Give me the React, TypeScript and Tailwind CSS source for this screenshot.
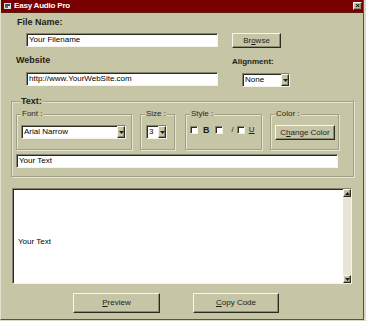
import React from "react";

const BG = "bg-[#c6c5a6]";
const sunken =
  "border border-t-[#85846e] border-l-[#85846e] border-b-[#f4f4ec] border-r-[#f4f4ec] shadow-[inset_1px_1px_0_#2c2b22]";
const raised =
  "border border-t-[#f6f6ee] border-l-[#f6f6ee] border-b-[#2c2b22] border-r-[#2c2b22] shadow-[inset_-1px_-1px_0_#8c8b74]";
const etched =
  "border border-[#a09f87] shadow-[inset_1px_1px_0_#e6e5d2,1px_1px_0_#e6e5d2]";

function Arrow({ up = false }: { up?: boolean }) {
  return (
    <svg width="5" height="3" viewBox="0 0 5 3" className={up ? "rotate-180" : ""}>
      <path d="M0 0h5L2.5 3z" fill="#1f1e18" />
    </svg>
  );
}

function Select({ value, w }: { value: string; w: string }) {
  return (
    <div className={`${w} h-[14px] bg-white flex items-stretch ${sunken}`}>
      <span className="flex-1 pl-[2px] text-[8px] leading-[12px] text-black truncate">{value}</span>
      <span className={`w-[8px] ${BG} ${raised} flex items-center justify-center`}>
        <Arrow />
      </span>
    </div>
  );
}

function Button({ children, cls }: { children: React.ReactNode; cls: string }) {
  return (
    <button className={`${cls} ${BG} ${raised} text-[8px] leading-none text-[#1f1e18] flex items-center justify-center`}>
      {children}
    </button>
  );
}

function Box({ label, cls, children }: { label: string; cls: string; children: React.ReactNode }) {
  return (
    <fieldset className={`${cls} ${etched}`}>
      <legend className={`ml-[4px] px-[1px] ${BG} text-[8px] leading-[10px] text-[#2a2920]`}>{label}</legend>
      {children}
    </fieldset>
  );
}

function Check() {
  return <span className={`block w-[8px] h-[8px] bg-white ${sunken}`} />;
}

export default function App() {
  return (
    <div
      className="w-[366px] h-[321px] bg-[#d9d8c4] overflow-hidden"
      style={{ fontFamily: '"Liberation Sans", Arial, sans-serif' }}
    >
      <div className={`w-[364px] h-[320px] ${BG} border-l border-l-[#e2e1cd] border-r border-r-[#55543f] border-b border-b-[#55543f]`}>
        {/* title bar */}
        <div className="h-[13px] bg-[#780000] flex items-center pl-[2px] pr-[1px] border-b border-b-[#5c1a10]">
          <svg width="7" height="6" viewBox="0 0 7 6" className="ml-[1px]">
            <rect x="0" y="0" width="7" height="6" fill="#e0e0d8" />
            <rect x="1" y="1" width="5" height="2" fill="#2a4a9a" />
            <rect x="1" y="3" width="3" height="2" fill="#6a6a60" />
          </svg>
          <span className="ml-[3px] text-[8px] font-bold tracking-[-0.2px] text-white leading-none">
            Easy Audio Pro
          </span>
          <span className={`ml-auto w-[9px] h-[8px] ${BG} ${raised} flex items-center justify-center text-[8px] leading-none text-black font-bold`}>
            ×
          </span>
        </div>

        {/* file name */}
        <div className="ml-[16px] mt-[4px] text-[9px] font-bold leading-[11px] text-[#1f1e18]">File Name:</div>
        <div className="flex items-start mt-[5px] ml-[25px]">
          <div className={`w-[192px] h-[14px] bg-white ${sunken} pl-[2px] text-[8px] leading-[12px] text-black`}>
            Your Filename
          </div>
          <Button cls="ml-[14px] w-[49px] h-[15px]">
            <span>
              Br<span className="underline">o</span>wse
            </span>
          </Button>
        </div>

        {/* website / alignment */}
        <div className="flex items-start mt-[7px]">
          <div className="w-[231px] pl-[15px] text-[9px] font-bold leading-[11px] text-[#1f1e18]">Website</div>
          <div className="pt-[1px] text-[8px] font-bold leading-[11px] text-[#1f1e18]">Alignment:</div>
        </div>
        <div className="flex items-start mt-[5px] ml-[25px]">
          <div className={`w-[192px] h-[14px] bg-white ${sunken} pl-[2px] text-[8px] leading-[12px] text-black`}>
            http://www.YourWebSite.com
          </div>
          <div className="ml-[24px] mt-[1px]">
            <Select value="None" w="w-[48px]" />
          </div>
        </div>

        {/* text group */}
        <fieldset className={`ml-[10px] mt-[9px] w-[343px] h-[81px] pl-[4px] ${etched}`}>
          <legend className={`ml-[4px] px-[1px] ${BG} text-[9px] font-bold leading-[11px] text-[#1f1e18]`}>Text:</legend>
          <div className="flex items-start mt-[2px]">
            <Box label="Font :" cls="w-[116px] h-[41px]">
              <div className="ml-[4px] mt-[6px]">
                <Select value="Arial Narrow" w="w-[105px]" />
              </div>
            </Box>
            <Box label="Size :" cls="ml-[8px] w-[35px] h-[41px]">
              <div className="ml-[5px] mt-[6px]">
                <Select value="3" w="w-[21px]" />
              </div>
            </Box>
            <Box label="Style :" cls="ml-[10px] w-[77px] h-[41px]">
              <div className="flex items-center ml-[4px] mt-[6px] text-[8px] leading-[10px] text-[#1f1e18]">
                <Check />
                <span className="ml-[5px] font-bold text-[9px]">B</span>
                <span className="ml-[5px]"><Check /></span>
                <span className="ml-[9px]">/</span>
                <span className="ml-[3px]"><Check /></span>
                <span className="ml-[4px] underline">U</span>
              </div>
            </Box>
            <Box label="Color :" cls="ml-[8px] w-[69px] h-[41px]">
              <Button cls="ml-[4px] mt-[6px] w-[60px] h-[15px]">
                <span>
                  C<span className="underline">h</span>ange Color
                </span>
              </Button>
            </Box>
          </div>
          <div className={`mt-[4px] w-[322px] h-[14px] bg-white ${sunken} pl-[2px] text-[8px] leading-[12px] text-black`}>
            Your Text
          </div>
        </fieldset>

        {/* preview area */}
        <div className={`ml-[11px] mt-[11px] w-[340px] h-[96px] bg-white ${sunken} flex`}>
          <div className="flex-1 flex items-center pl-[5px] pt-[12px] text-[8px] text-black">Your Text</div>
          <div className="w-[8px] bg-[#e6e5d6] flex flex-col justify-between">
            <span className={`h-[8px] ${BG} ${raised} flex items-center justify-center`}>
              <Arrow up />
            </span>
            <span className={`h-[8px] ${BG} ${raised} flex items-center justify-center`}>
              <Arrow />
            </span>
          </div>
        </div>

        {/* buttons */}
        <div className="flex mt-[9px] ml-[72px]">
          <Button cls="w-[87px] h-[20px]">
            <span>
              <span className="underline">P</span>review
            </span>
          </Button>
          <Button cls="ml-[33px] w-[86px] h-[20px]">
            <span>
              <span className="underline">C</span>opy Code
            </span>
          </Button>
        </div>
      </div>
    </div>
  );
}
